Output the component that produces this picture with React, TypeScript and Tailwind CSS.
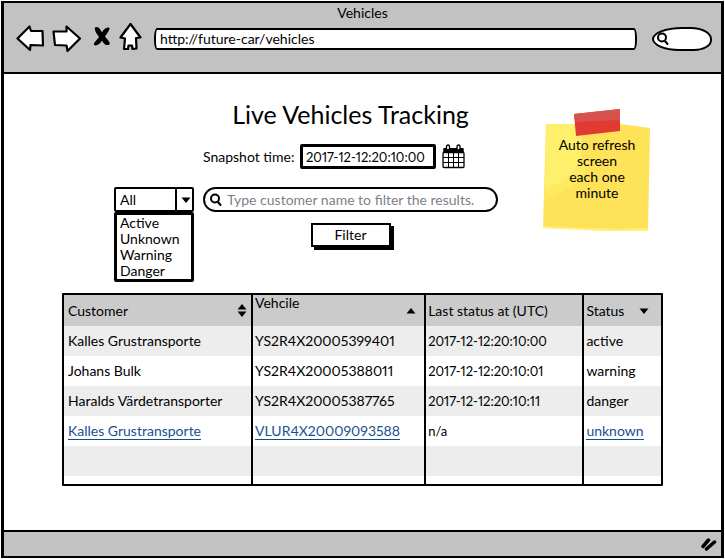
import React, { useState } from "react";

type Vehicle = {
  customer: string;
  vin: string;
  lastStatus: string;
  status: string;
  linked?: boolean;
};

const vehicles: Vehicle[] = [
  { customer: "Kalles Grustransporte", vin: "YS2R4X20005399401", lastStatus: "2017-12-12:20:10:00", status: "active" },
  { customer: "Johans Bulk", vin: "YS2R4X20005388011", lastStatus: "2017-12-12:20:10:01", status: "warning" },
  { customer: "Haralds Värdetransporter", vin: "YS2R4X20005387765", lastStatus: "2017-12-12:20:10:11", status: "danger" },
  { customer: "Kalles Grustransporte", vin: "VLUR4X20009093588", lastStatus: "n/a", status: "unknown", linked: true },
];

const statuses = ["Active", "Unknown", "Warning", "Danger"];

function NavButton({ label, children }: { label: string; children: React.ReactNode }) {
  return (
    <button type="button" aria-label={label} className="shrink-0">
      {children}
    </button>
  );
}

const ink = { stroke: "#000", strokeWidth: 2.2, strokeLinejoin: "round", strokeLinecap: "round" } as const;

function BackIcon() {
  return (
    <svg width="28" height="28" viewBox="0 0 28 28" fill="#fff" {...ink}>
      <path d="M1.500 13.500 13.500 1.500 15 6 26.500 6 27 20.500 14.500 20 14 25Z" />
    </svg>
  );
}

function ForwardIcon() {
  return (
    <svg width="29" height="28" viewBox="0 0 29 28" fill="#fff" {...ink}>
      <path d="M1.500 6.500 14.500 6.500 14.500 1.500 28 13.500 15.500 26 14.500 20.500 3 20Z" />
    </svg>
  );
}

function StopIcon() {
  return (
    <svg width="18" height="22" viewBox="0 0 18 22" fill="#000">
      <path d="M2 1.500C5-.5 7.500 3.500 9 6.500 10.500 3 14 .5 16.500 2 17 4.500 13.500 7.500 12 10.500 13.500 13 17.500 15.500 16.500 18.500 13 20.500 10 17 9 14.500 7 18 3.500 20.500 1 19 .5 16.500 4 14 6 11 4 8 1 4.500 2 1.500Z" />
    </svg>
  );
}

function HomeIcon() {
  return (
    <svg width="23" height="29" viewBox="0 0 23 29" fill="#fff" {...ink}>
      <path d="M11.500 2 1.500 15.500 6 16.500 5 27 9 27 9.500 23.500 13 23.500 13.500 27 17.500 26.500 17 16 21.500 15.500Z" />
    </svg>
  );
}

function SearchIcon() {
  return (
    <svg width="14" height="14" viewBox="0 0 14 14" fill="none" {...ink} strokeWidth={2}>
      <circle cx="6" cy="5.500" r="4" />
      <path d="M9 9 11.500 12" />
    </svg>
  );
}

function CalendarIcon() {
  return (
    <svg width="23" height="25" viewBox="0 0 23 25">
      <path d="M1.500 4h20l.5 5H1Z" fill="#000" />
      <rect x="1" y="8.500" width="21" height="15" rx="1" fill="#fff" stroke="#000" strokeWidth="1.300" />
      <path d="M6.500 8.500v15M11.500 8.500v15M16.500 8.500v15M1 13.500h21M1 18.500h21" stroke="#000" />
      <rect x="4.500" y="1" width="3" height="5" rx="1.500" fill="#fff" stroke="#000" strokeWidth="1.300" />
      <rect x="15" y="1" width="3" height="5" rx="1.500" fill="#fff" stroke="#000" strokeWidth="1.300" />
    </svg>
  );
}

function Triangle({ up = false }: { up?: boolean }) {
  return (
    <svg width="10" height="6" viewBox="0 0 10 6" fill="#000">
      <path d={up ? "M5 0 9.500 5.500H.5Z" : "M5 6 9.500.5H.5Z"} />
    </svg>
  );
}

function StickyNote() {
  return (
    <aside className="relative h-[124px] w-[108px] pt-7">
      <svg className="absolute inset-0 size-full" viewBox="0 0 108 124" preserveAspectRatio="none">
        <path d="M3 15 77 15 107 19 105 122 0 119Z" fill="#fee258" />
        <path d="M3 15 40 15 38 50 28 66 2 82Z" fill="#fff06c" />
        <path d="M2 82 28 66 38 50 50 50 34 74 1 92Z" fill="#ffe962" />
        <path d="M0 117 40 119 76 120 105 119 105 122 60 122 0 119Z" fill="#fff07a" />
        <path d="M31 5 77 0 77 22 33 27Z" fill="#e03a33" />
        <path d="M31 5 77 0 77 11 32 13Z" fill="#d8524d" />
      </svg>
      <p className="relative text-center leading-4">
        Auto refresh
        <br />
        screen
        <br />
        each one
        <br />
        minute
      </p>
    </aside>
  );
}

function Cell({ text, linked }: { text: string; linked?: boolean }) {
  if (!linked) return <>{text}</>;
  return (
    <a href="#vehicle" className="border-b border-[#0b4f96] text-[#1b4f8f]">
      {text}
    </a>
  );
}

export default function App() {
  const [status, setStatus] = useState("All");

  return (
    <div className="flex min-h-screen bg-white p-px font-['Lato','Liberation_Sans',sans-serif] text-[14px] leading-4 text-black proportional-nums">
      <div className="flex min-w-0 flex-1 flex-col border-x-[3px] border-y-2 border-black">
        <header className="border-b-2 border-black bg-[#c2c2c2] pt-[2px] pb-4">
          <div className="text-center">Vehicles</div>
          <nav className="flex h-[35px] items-center pr-[9px] pl-3">
            <NavButton label="Back"><BackIcon /></NavButton>
            <div className="ml-2 flex"><NavButton label="Forward"><ForwardIcon /></NavButton></div>
            <div className="ml-3 flex pb-1"><NavButton label="Stop"><StopIcon /></NavButton></div>
            <div className="ml-2 flex pb-1"><NavButton label="Home"><HomeIcon /></NavButton></div>
            <input
              aria-label="Address"
              defaultValue="http://future-car/vehicles"
              className="ml-3 h-[22px] min-w-0 flex-1 rounded-[3px/10px] border-2 border-black bg-white px-1 outline-none"
            />
            <label className="ml-[15px] flex h-6 w-[60px] items-center rounded-[50%_35%_30%_45%/50%_50%_45%_50%] border-2 border-black bg-white pl-[2px]">
              <SearchIcon />
              <input aria-label="Search the web" className="w-8 bg-transparent outline-none" />
            </label>
          </nav>
        </header>

        <main className="flex-1 px-[58px] pt-6 pb-[43px]">
          <form className="grid grid-cols-[80px_minmax(0,1fr)_144px] gap-x-[9px] pr-3 pl-[52px]" onSubmit={(e) => e.preventDefault()}>
            <div className="pt-[89px]">
              <div className="relative">
                <select
                  aria-label="Status"
                  value={status}
                  onChange={(e) => setStatus(e.target.value)}
                  className="h-[25px] w-full appearance-none rounded-[2px] border-2 border-black bg-white pl-1 outline-none"
                >
                  <option>All</option>
                  {statuses.map((s) => (
                    <option key={s}>{s}</option>
                  ))}
                </select>
                <span className="pointer-events-none absolute inset-y-0 right-0 flex w-[19px] items-center justify-center border-l-2 border-black">
                  <Triangle />
                </span>
                <ul className="absolute top-full left-0 w-full rounded-[2px] border-[3px] border-black bg-white">
                  {statuses.map((s) => (
                    <li key={s} className="flex">
                      <button type="button" className="w-full pl-[3px] text-left" onClick={() => setStatus(s)}>
                        {s}
                      </button>
                    </li>
                  ))}
                </ul>
              </div>
            </div>

            <div className="flex flex-col">
              <h1 className="text-center text-[25px] leading-8 whitespace-nowrap">Live Vehicles Tracking</h1>
              <div className="mt-[14px] flex items-center">
                <label htmlFor="snapshot" className="w-[97px] whitespace-nowrap">Snapshot time:</label>
                <input
                  id="snapshot"
                  defaultValue="2017-12-12:20:10:00"
                  className="h-[25px] w-[136px] rounded-[2px] border-[3px] border-black px-[3px] text-[13px] outline-none"
                />
                <button type="button" aria-label="Open calendar" className="ml-[6px]">
                  <CalendarIcon />
                </button>
              </div>
              <label className="mt-[18px] flex h-[25px] items-center gap-1 rounded-full border-2 border-black pl-1">
                <SearchIcon />
                <input
                  aria-label="Customer name"
                  placeholder="Type customer name to filter the results."
                  className="min-w-0 flex-1 outline-none placeholder:text-[#808088]"
                />
              </label>
              <button
                type="submit"
                className="mt-[11px] h-6 w-20 self-center border-2 border-black bg-white shadow-[3px_3px_0_#000]"
              >
                Filter
              </button>
            </div>

            <div className="flex justify-end pt-[11px]">
              <StickyNote />
            </div>
          </form>

          <div className="mt-[46px] rounded-[1px] border-2 border-black">
            <table className="w-full table-fixed border-collapse text-left">
              <colgroup>
                <col className="w-[31.5%]" />
                <col className="w-[29%]" />
                <col className="w-[26.5%]" />
                <col />
              </colgroup>
              <thead>
                <tr className="h-[31px] bg-[#cbcbcb] [&>th]:p-0 [&>th]:font-normal">
                  <th className="border-r-2 border-black">
                    <div className="flex items-center justify-between px-1">
                      Customer
                      <span className="flex flex-col gap-px">
                        <Triangle up />
                        <Triangle />
                      </span>
                    </div>
                  </th>
                  <th className="border-r-2 border-black">
                    <div className="flex h-[31px] justify-between pr-2 pl-[2px]">
                      Vehcile
                      <span className="self-center">
                        <Triangle up />
                      </span>
                    </div>
                  </th>
                  <th className="border-r-2 border-black">
                    <div className="pl-[2px] whitespace-nowrap">Last status at (UTC)</div>
                  </th>
                  <th>
                    <div className="flex items-center justify-between pr-3 pl-[2px]">
                      Status
                      <Triangle />
                    </div>
                  </th>
                </tr>
              </thead>
              <tbody className="[&_td]:border-black [&_td]:p-0 [&_td]:pl-[2px] [&_td:first-child]:pl-1 [&_td:not(:last-child)]:border-r-2">
                {vehicles.map((v) => (
                  <tr key={v.vin} className="h-[30px] odd:bg-[#ededed]">
                    <td><Cell text={v.customer} linked={v.linked} /></td>
                    <td><Cell text={v.vin} linked={v.linked} /></td>
                    <td className="text-[13px]">{v.lastStatus}</td>
                    <td><Cell text={v.status} linked={v.linked} /></td>
                  </tr>
                ))}
                <tr className="h-[30px] odd:bg-[#ededed]"><td /><td /><td /><td /></tr>
                <tr className="h-2"><td /><td /><td /><td /></tr>
              </tbody>
            </table>
          </div>
        </main>

        <footer className="flex h-[26px] items-center justify-end border-t-2 border-black bg-[#c2c2c2] pr-1">
          <svg width="17" height="14" viewBox="0 0 17 14" stroke="#000" strokeWidth="3.500" strokeLinecap="round">
            <path d="M3 9.500 8.500 3M6.500 12 14.500 5" />
          </svg>
        </footer>
      </div>
    </div>
  );
}
